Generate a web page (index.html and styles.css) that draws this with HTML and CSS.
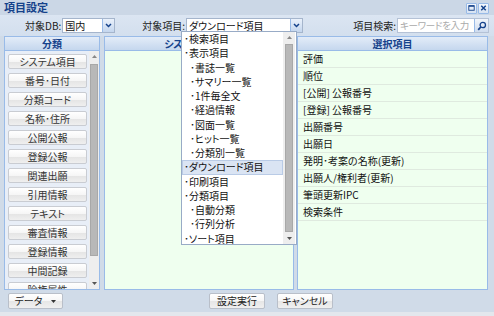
FILE: index.html
```html
<!DOCTYPE html>
<html lang="ja">
<head>
<meta charset="utf-8">
<title>項目設定</title>
<link rel="stylesheet" href="styles.css">
</head>
<body>
<div class="win">
  <div class="titlebar">
    <span class="title">項目設定</span>
    <div class="tools">
      <span class="tool"><svg width="10" height="10" viewBox="0 0 10 10"><rect x="2" y="2.5" width="6" height="5" fill="none" stroke="#15428b" stroke-width="1"/><rect x="2" y="2" width="6" height="1.6" fill="#15428b"/></svg></span>
      <span class="tool"><svg width="10" height="10" viewBox="0 0 10 10"><path d="M2.5 2.5l5 5M7.5 2.5l-5 5" stroke="#15428b" stroke-width="1.6"/></svg></span>
    </div>
  </div>

  <div class="toolbar">
    <span class="lbl">対象DB:</span>
    <div class="combo combo-db"><span class="val">国内</span><span class="trig"><svg width="7" height="5" viewBox="0 0 7 5"><path d="M1 1l2.5 2.5L6 1" stroke="#15428b" stroke-width="1.5" fill="none"/></svg></span></div>
    <span class="lbl lbl-item">対象項目:</span>
    <div class="combo combo-item"><span class="val">ダウンロード項目</span><span class="trig"><svg width="7" height="5" viewBox="0 0 7 5"><path d="M1 1l2.5 2.5L6 1" stroke="#15428b" stroke-width="1.5" fill="none"/></svg></span></div>
    <span class="lbl lbl-search">項目検索:</span>
    <div class="search"><span class="ph">キーワードを入力</span><span class="sbtn"><svg width="10" height="10" viewBox="0 0 10 10"><circle cx="5.8" cy="4" r="2.7" fill="none" stroke="#15428b" stroke-width="1.3"/><path d="M3.8 6l-2.6 2.8" stroke="#15428b" stroke-width="1.8"/></svg></span></div>
  </div>

  <div class="main">
    <div class="panel left">
      <div class="phead">分類</div>
      <div class="pbody lbody">
        <div class="btnlist">
          <div class="cbtn">システム項目</div>
          <div class="cbtn">番号･日付</div>
          <div class="cbtn">分類コード</div>
          <div class="cbtn">名称･住所</div>
          <div class="cbtn">公開公報</div>
          <div class="cbtn">登録公報</div>
          <div class="cbtn">関連出願</div>
          <div class="cbtn">引用情報</div>
          <div class="cbtn">テキスト</div>
          <div class="cbtn">審査情報</div>
          <div class="cbtn">登録情報</div>
          <div class="cbtn">中間記録</div>
          <div class="cbtn">除権属性</div>
        </div>
        <div class="vscroll">
          <span class="arr"><svg width="5" height="3" viewBox="0 0 5 3"><path d="M0 3L2.5 0 5 3z" fill="#888"/></svg></span>
          <span class="thumb"></span>
          <span class="arr down"><svg width="5" height="3" viewBox="0 0 5 3"><path d="M0 0L2.5 3 5 0z" fill="#555"/></svg></span>
        </div>
      </div>
    </div>

    <div class="panel mid">
      <div class="phead mhead">システム項目</div>
      <div class="pbody green"></div>
    </div>

    <div class="panel right">
      <div class="phead">選択項目</div>
      <div class="pbody green">
        <div class="row">評価</div>
        <div class="row">順位</div>
        <div class="row">[公開] 公報番号</div>
        <div class="row">[登録] 公報番号</div>
        <div class="row">出願番号</div>
        <div class="row">出願日</div>
        <div class="row">発明･考案の名称(更新)</div>
        <div class="row">出願人/権利者(更新)</div>
        <div class="row">筆頭更新IPC</div>
        <div class="row">検索条件</div>
      </div>
    </div>
  </div>

  <div class="footer">
    <div class="fbtn data"><span>データ</span><svg width="5" height="3" viewBox="0 0 5 3"><path d="M0 0L2.5 3 5 0z" fill="#333"/></svg></div>
    <div class="fbtn run">設定実行</div>
    <div class="fbtn">キャンセル</div>
  </div>

  <div class="dropdown">
    <div class="dlist">
      <div class="ditem">･検索項目</div>
      <div class="ditem">･表示項目</div>
      <div class="ditem sub">･書誌一覧</div>
      <div class="ditem sub">･サマリー一覧</div>
      <div class="ditem sub">･1件毎全文</div>
      <div class="ditem sub">･経過情報</div>
      <div class="ditem sub">･図面一覧</div>
      <div class="ditem sub">･ヒット一覧</div>
      <div class="ditem sub">･分類別一覧</div>
      <div class="ditem sel">･ダウンロード項目</div>
      <div class="ditem">･印刷項目</div>
      <div class="ditem">･分類項目</div>
      <div class="ditem sub">･自動分類</div>
      <div class="ditem sub">･行列分析</div>
      <div class="ditem">･ソート項目</div>
    </div>
    <div class="dscroll">
      <span class="arr"><svg width="5" height="3" viewBox="0 0 5 3"><path d="M0 3L2.5 0 5 3z" fill="#888"/></svg></span>
      <span class="thumb"></span>
      <span class="arr down"><svg width="5" height="3" viewBox="0 0 5 3"><path d="M0 0L2.5 3 5 0z" fill="#555"/></svg></span>
    </div>
  </div>
</div>
</body>
</html>
```

FILE: styles.css
```css
* { box-sizing: border-box; }
html, body { margin: 0; padding: 0; }
body {
  width: 494px;
  height: 316px;
  overflow: hidden;
  font-family: "Noto Sans CJK JP", "Noto Sans", sans-serif;
  font-size: 10px;
  font-feature-settings: "palt";
  color: #111;
  background: #e3e7ed;
}
.win {
  position: relative;
  width: 494px;
  height: 312px;
  background: #d0dbe8;
}
.titlebar {
  height: 15px;
  display: flex;
  align-items: center;
  padding: 0 5px 0 4px;
  background: #cbd7e6;
}
.title {
  font-weight: bold;
  font-size: 11px;
  color: #15428b;
  line-height: 15px;
}
.tools { margin-left: auto; display: flex; gap: 1px; padding-top: 1px; }
.tool {
  width: 11px; height: 11px;
  display: flex; align-items: center; justify-content: center;
  border: 1px solid #99bbe8;
  background: linear-gradient(#f4f8fd, #d6e2f2);
  border-radius: 1px;
}
.toolbar {
  height: 21px;
  display: flex;
  align-items: center;
  padding: 0 5px 0 25px;
  background: linear-gradient(#dbe5f2, #d3dfee);
}
.lbl { color: #222; line-height: 14px; margin-right: 1px; }
.lbl-item { margin-left: 27px; }
.lbl-search { margin-left: auto; }
.combo {
  height: 15px;
  display: flex;
  border: 1px solid #a5b5cc;
  background: #fff;
}
.combo-db { width: 53px; }
.combo-item { width: 117px; }
.combo .val { flex: 1; padding-left: 2px; line-height: 13px; white-space: nowrap; overflow: hidden; }
.trig {
  width: 12px;
  border-left: 1px solid #99bbe8;
  background: linear-gradient(#eaf1fb, #c4d6ee);
  display: flex; align-items: center; justify-content: center;
}
.search {
  width: 92px; height: 15px;
  display: flex;
  border: 1px solid #b5c2d6;
  background: #fff;
}
.ph {
  flex: 1;
  color: #aaa;
  padding-left: 2px;
  line-height: 13px;
  font-size: 9.5px;
  letter-spacing: -0.3px;
  white-space: nowrap;
  overflow: hidden;
}
.sbtn {
  width: 14px;
  flex: none;
  border-left: 1px solid #99bbe8;
  background: linear-gradient(#f2f6fc, #cfdcef);
  display: flex; align-items: center; justify-content: center;
}

.main {
  height: 254px;
  display: flex;
  padding: 0 6px 0 4px;
  gap: 4px;
}
.panel {
  display: flex;
  flex-direction: column;
  border: 1px solid #99bbe8;
  overflow: hidden;
}
.left { width: 96px; }
.mid { width: 190px; }
.right { width: 191px; margin-left: -1px; }
.phead {
  height: 14px;
  flex: none;
  border-bottom: 1px solid #99bbe8;
  background: linear-gradient(#e3ecf8, #c5d7ee);
  color: #15428b;
  font-weight: bold;
  text-align: center;
  line-height: 13px;
  white-space: nowrap;
}
.mhead { letter-spacing: -0.6px; padding-right: 16px; }
.pbody { flex: 1; min-height: 0; }
.green { background: #efffef; }
.lbody {
  display: flex;
  background: #e8eef7;
}
.btnlist {
  flex: 1;
  padding: 3px 0 0 3px;
  display: flex;
  flex-direction: column;
  gap: 4px;
  overflow: hidden;
}
.cbtn {
  flex: none;
  width: 79px;
  height: 15px;
  border: 1px solid #c9ccd2;
  border-radius: 2px;
  background: linear-gradient(#ffffff 0%, #f6f6f6 50%, #e4e4e4 51%, #efefef 100%);
  text-align: center;
  line-height: 13px;
  color: #333;
}
.vscroll, .dscroll {
  width: 10px;
  display: flex;
  flex-direction: column;
  align-items: center;
  background: #eeeeee;
}
.vscroll .arr, .dscroll .arr {
  height: 11px;
  display: flex; align-items: center; justify-content: center;
  flex: none;
}
.vscroll .thumb {
  width: 8px;
  height: 192px;
  margin-top: 2px;
  background: #b8b8b8;
  border: 1px solid #a8a8a8;
}
.vscroll .down, .dscroll .down { margin-top: auto; }
.row {
  height: 17px;
  border-bottom: 1px solid #dfeadf;
  padding-left: 5px;
  line-height: 16px;
  color: #111;
}

.footer {
  height: 22px;
  display: flex;
  align-items: center;
  padding: 0 0 0 8px;
}
.fbtn {
  height: 16px;
  width: 56px;
  border: 1px solid #b9bfc9;
  border-radius: 2px;
  background: linear-gradient(#ffffff 0%, #f6f6f6 50%, #e6e6e6 51%, #f0f0f0 100%);
  text-align: center;
  line-height: 14px;
  color: #222;
}
.fbtn.data { width: 55px; display: flex; align-items: center; justify-content: center; gap: 9px; }
.fbtn.run { margin-left: 146px; margin-right: 12px; }

.dropdown {
  position: absolute;
  left: 181px;
  top: 31px;
  width: 116px;
  height: 214px;
  display: flex;
  border: 1px solid #98abc6;
  background: #fff;
}
.dlist { flex: 1; }
.ditem {
  height: 14.25px;
  line-height: 14px;
  padding-left: 2px;
  white-space: nowrap;
  color: #111;
}
.ditem.sub { padding-left: 8px; }
.ditem.sel {
  background: #dae4f3;
  outline: 1px solid #b9cbe6;
  outline-offset: -1px;
}
.dscroll { width: 12px; margin-right: 1px; }
.dscroll .thumb {
  width: 8px;
  height: 188px;
  margin-top: 1px;
  background: #b8b8b8;
  border: 1px solid #a8a8a8;
}
```
